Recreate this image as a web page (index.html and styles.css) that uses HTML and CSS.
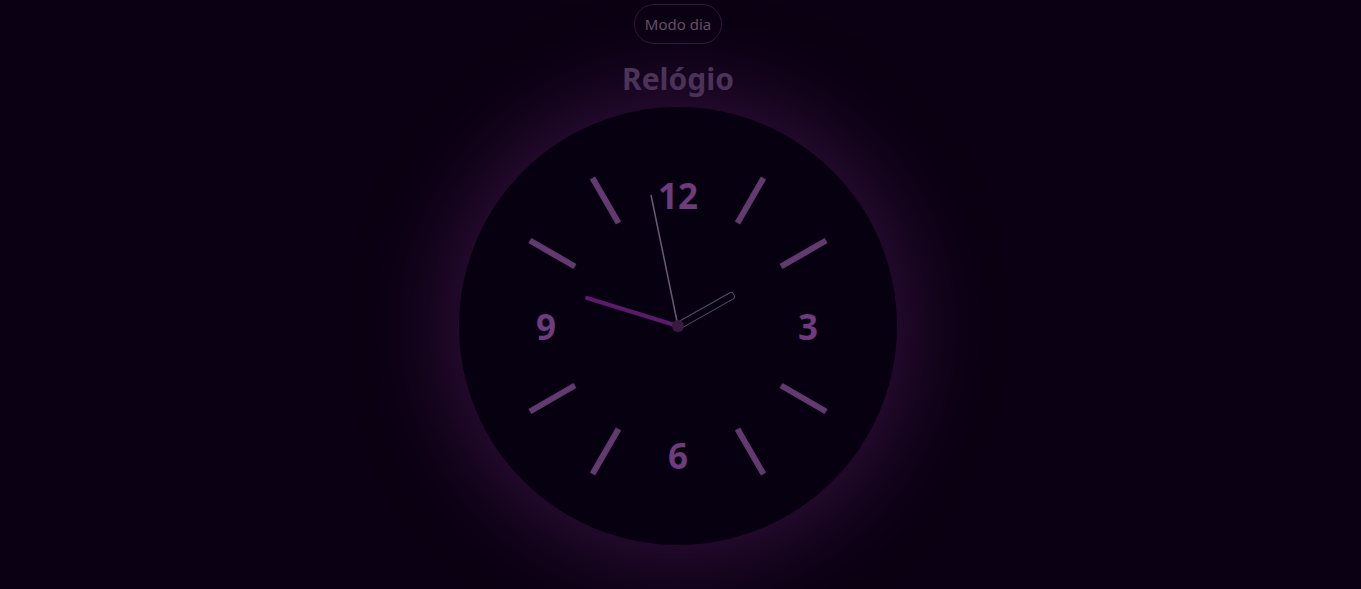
FILE: index.html
```html
<!DOCTYPE html>
<html lang="pt">
<head>
<meta charset="utf-8">
<title>Relógio</title>
<link rel="stylesheet" href="styles.css">
</head>
<body>
<main class="page">
  <button class="mode-btn">Modo dia</button>
  <h1 class="title">Relógio</h1>
  <div class="clock">
    <svg class="face" viewBox="0 0 438 438" width="438" height="438">
      <g class="ticks" transform="translate(219 219)">
        <line x1="0" y1="-119" x2="0" y2="-171" transform="rotate(30)"/>
        <line x1="0" y1="-119" x2="0" y2="-171" transform="rotate(60)"/>
        <line x1="0" y1="-119" x2="0" y2="-171" transform="rotate(120)"/>
        <line x1="0" y1="-119" x2="0" y2="-171" transform="rotate(150)"/>
        <line x1="0" y1="-119" x2="0" y2="-171" transform="rotate(210)"/>
        <line x1="0" y1="-119" x2="0" y2="-171" transform="rotate(240)"/>
        <line x1="0" y1="-119" x2="0" y2="-171" transform="rotate(300)"/>
        <line x1="0" y1="-119" x2="0" y2="-171" transform="rotate(330)"/>
      </g>
      <g class="nums">
        <text x="219" y="88">12</text>
        <text x="349" y="219">3</text>
        <text x="219" y="348">6</text>
        <text x="87" y="219">9</text>
      </g>
      <rect class="hand-outline" x="0" y="-3.5" width="64" height="7" rx="2.5" transform="translate(219 219) rotate(-29.4)"/>
      <line class="hand-hour" x1="219" y1="219" x2="128" y2="191"/>
      <line class="hand-minute" x1="219" y1="219" x2="192" y2="88"/>
      <circle class="hub" cx="219" cy="219" r="6"/>
    </svg>
  </div>
</main>
</body>
</html>
```

FILE: styles.css
```css
html, body {
  margin: 0;
  padding: 0;
  background: #0b0013;
  height: 100%;
  overflow: hidden;
}

.page {
  display: flex;
  flex-direction: column;
  align-items: center;
  padding-right: 5px;
  font-family: "Noto Sans", "Open Sans", sans-serif;
}

.mode-btn {
  margin-top: 4px;
  height: 40px;
  padding: 0 10px;
  border: 1px solid #33183b;
  border-radius: 20px;
  background: transparent;
  color: #655268;
  font-family: "Noto Sans", "Open Sans", sans-serif;
  font-size: 15px;
}

.title {
  margin: 15px 0 0;
  font-size: 30px;
  line-height: 40px;
  font-weight: 700;
  color: #4d3a5a;
}

.clock {
  margin-top: 8px;
  width: 438px;
  height: 438px;
  border-radius: 50%;
  background: #070011;
  box-shadow: 0 0 80px 18px rgba(75, 25, 85, 0.55);
}

.face {
  display: block;
}

.ticks line {
  stroke: #633a70;
  stroke-width: 6;
}

.nums text {
  fill: #6e3b7c;
  font-family: "Noto Sans", "Open Sans", sans-serif;
  font-weight: 700;
  font-size: 35px;
  text-anchor: middle;
  dominant-baseline: central;
}

.hand-outline {
  fill: none;
  stroke: #5a4a63;
  stroke-width: 1;
}

.hand-hour {
  stroke: #5b1a6b;
  stroke-width: 4;
  stroke-linecap: round;
}

.hand-minute {
  stroke: #6a5a74;
  stroke-width: 1.5;
}

.hub {
  fill: #3a1a42;
}
```
